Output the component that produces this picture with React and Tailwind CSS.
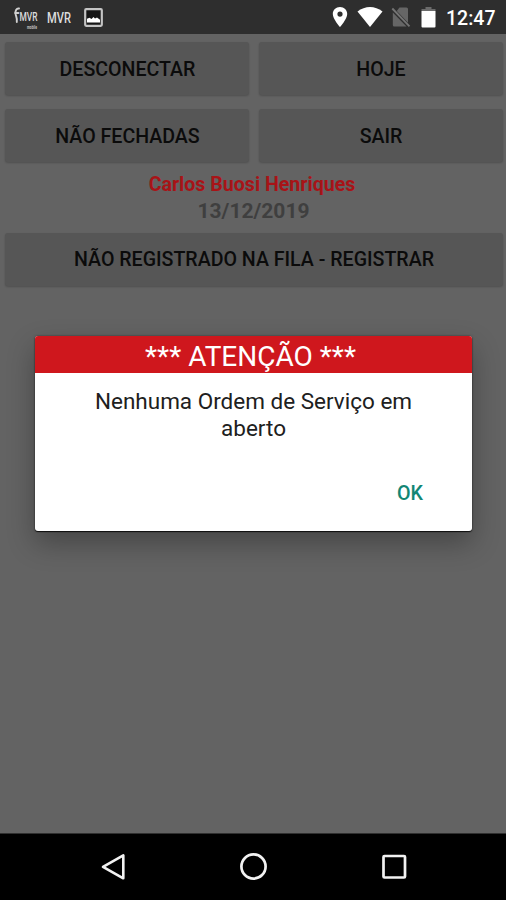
import { useState } from 'react';

function StatusBar() {
  return (
    <header className="flex h-[34px] shrink-0 items-center bg-[#2e2e2e] pl-[14px] pr-[10px] text-white">
      <svg width="26" height="28" viewBox="0 0 26 28" className="shrink-0 overflow-visible">
        <path d="M5 5.500C2.500 5 1.200 7.500 1.500 10.500C1.800 13.500 3.500 15 2.800 19M1 10H4.500" fill="none" stroke="#d0d0d0" strokeWidth="1.900" strokeLinecap="round" />
        <text x="5.500" y="17.500" textLength="18" lengthAdjust="spacingAndGlyphs" fill="#dcdcdc" fontSize="12" fontWeight="500">MVR</text>
        <text x="13" y="25.500" textLength="10" lengthAdjust="spacingAndGlyphs" fill="#c4c4c4" fontSize="4.500" fontWeight="700">mobile</text>
      </svg>
      <svg width="28" height="28" viewBox="0 0 28 28" className="ml-[7px] shrink-0 overflow-visible">
        <text x="0" y="19.500" textLength="24" lengthAdjust="spacingAndGlyphs" fill="#dcdcdc" fontSize="14.500" fontWeight="500">MVR</text>
      </svg>
      <svg width="19" height="19" viewBox="0 0 19 19" className="ml-[9px] mt-px shrink-0">
        <rect x="1.200" y="1.200" width="16.600" height="16.600" rx="1" fill="#151515" stroke="#c4c4c4" strokeWidth="2.200" />
        <path d="M3 14.500V10.800L5.500 9.800L7.500 11L9.500 9L11 10.500L13 9.500L16 11.800V14.500Z" fill="#fff" />
      </svg>

      <div className="ml-auto flex items-center">
        <svg width="16" height="20" viewBox="0 0 16 20" className="shrink-0">
          <path fillRule="evenodd" d="M8 0C3.900 0 0.800 3.100 0.800 7C0.800 12 8 20 8 20S15.200 12 15.200 7C15.200 3.100 12.100 0 8 0ZM8 4.500A2.600 2.600 0 1 1 8 9.700A2.600 2.600 0 1 1 8 4.500Z" fill="#fff" />
        </svg>
        <svg width="26" height="20" viewBox="0 0 26 20" className="ml-[9px] shrink-0">
          <path d="M0.500 4.500C8 -1.500 18 -1.500 25.500 4.500L13 20Z" fill="#fff" />
        </svg>
        <svg width="20" height="22" viewBox="0 0 20 22" className="ml-[8px] shrink-0">
          <path d="M8.500 1.500H15.500Q17 1.500 17 3V16.700L5.800 5Z" fill="#666" />
          <path d="M1.800 6.500L15.500 20.500H3.300Q1.800 20.500 1.800 19Z" fill="#666" />
          <path d="M1.300 2.500L18.500 20.300" stroke="#747474" strokeWidth="1.900" />
        </svg>
        <svg width="15" height="21" viewBox="0 0 15 21" className="ml-[10px] shrink-0">
          <path d="M4.500 0H10.500V2H14.500V4H0.500V2H4.500Z" fill="#6b6b6b" />
          <path d="M0.500 4H14.500V19.500Q14.500 20.500 13.500 20.500H1.500Q0.500 20.500 0.500 19.500Z" fill="#fff" />
        </svg>
        <svg width="50" height="28" viewBox="0 0 50 28" className="ml-[10px] shrink-0 overflow-visible">
          <text x="0" y="22" textLength="49.500" lengthAdjust="spacingAndGlyphs" fill="#fff" fontSize="19.500" fontWeight="500">12:47</text>
        </svg>
      </div>
    </header>
  );
}

function MenuButton({ children, className = '', onClick }) {
  return (
    <button
      type="button"
      onClick={onClick}
      className={`h-[53px] rounded-[3px] bg-[#565656] text-[19.6px] font-medium text-[#0b0b0b] shadow-[0_1px_2px_rgba(0,0,0,0.2)] ${className}`}
    >
      {children}
    </button>
  );
}

function AlertDialog({ onClose }) {
  return (
    <div className="absolute left-[35px] top-[336px] flex h-[195px] w-[437px] flex-col overflow-hidden rounded-[3px] bg-white shadow-[0_1px_1px_rgba(0,0,0,0.8),0_0_2px_rgba(0,0,0,0.5),0_12px_28px_rgba(0,0,0,0.3)]">
      <h2 className="h-[37px] shrink-0 bg-[#cf171d] pr-[6px] text-center text-[28px] leading-[41px] text-white">
        *** ATENÇÃO ***
      </h2>
      <p className="px-10 pt-[15px] text-center text-[22.5px] leading-[27px] text-[#202020]">
        Nenhuma Ordem de Serviço em
        <br />
        aberto
      </p>
      <div className="mt-auto flex justify-end pb-[23px] pr-[49px]">
        <button type="button" onClick={onClose} className="text-[19.7px] font-medium leading-[28px] text-[#128674]">
          OK
        </button>
      </div>
    </div>
  );
}

function NavigationBar() {
  return (
    <nav className="flex h-[67px] shrink-0 items-center justify-between border-t border-[#303030] bg-black pl-[100px] pr-[99px]">
      <svg width="26" height="28" viewBox="0 0 26 28" fill="none" stroke="#f2f2f2" strokeWidth="2.600" strokeLinejoin="round">
        <path d="M23.300 2.300V25.300L3 13.800Z" />
      </svg>
      <svg width="28" height="28" viewBox="0 0 28 28" fill="none" stroke="#f2f2f2" strokeWidth="2.700">
        <circle cx="13.500" cy="13.500" r="12.100" />
      </svg>
      <svg width="26" height="28" viewBox="0 0 26 28" fill="none" stroke="#f2f2f2" strokeWidth="2.700">
        <rect x="2.500" y="3" width="21.500" height="21.500" rx="1" />
      </svg>
    </nav>
  );
}

export default function App() {
  const [showAlert, setShowAlert] = useState(true);

  return (
    <div className="relative flex h-[900px] w-[506px] flex-col overflow-hidden bg-[#636363] font-['Roboto',sans-serif]">
      <StatusBar />
      <main className="flex-1 pl-[5px] pr-[3px] pt-[8px]">
        <div className="grid grid-cols-2 gap-x-[10px] gap-y-[14px]">
          <MenuButton className="pl-px pt-[2px]">DESCONECTAR</MenuButton>
          <MenuButton className="pt-[2px]">HOJE</MenuButton>
          <MenuButton className="pl-px pt-[2px]">NÃO FECHADAS</MenuButton>
          <MenuButton className="pt-[2px]" onClick={() => setShowAlert(true)}>SAIR</MenuButton>
        </div>
        <div className="mt-[9px] pr-[3px] text-center font-bold">
          <p className="pr-px text-[19.6px] leading-[27px] text-[#a81317]">Carlos Buosi Henriques</p>
          <p className="pl-[2px] text-[21px] leading-[26px] text-[#3f3f3f]">13/12/2019</p>
        </div>
        <MenuButton className="mt-[9px] w-full">NÃO REGISTRADO NA FILA - REGISTRAR</MenuButton>
      </main>
      <NavigationBar />
      {showAlert && <AlertDialog onClose={() => setShowAlert(false)} />}
    </div>
  );
}
